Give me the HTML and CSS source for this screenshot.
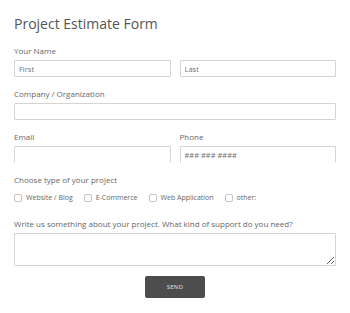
FILE: index.html
```html
<!DOCTYPE html>
<html>
<head>
<meta charset="utf-8">
<link rel="stylesheet" href="styles.css">
</head>
<body>
<form class="form">
  <h1 class="title">Project Estimate Form</h1>
  <div class="field">
    <label class="label">Your Name</label>
    <div class="row">
      <input class="input" type="text" placeholder="First">
      <input class="input" type="text" placeholder="Last">
    </div>
  </div>
  <div class="field">
    <label class="label">Company / Organization</label>
    <input class="input" type="text">
  </div>
  <div class="row">
    <div class="field">
      <label class="label">Email</label>
      <input class="input input-open" type="text">
    </div>
    <div class="field">
      <label class="label">Phone</label>
      <input class="input input-open" type="text" placeholder="### ### ####">
    </div>
  </div>
  <div class="field">
    <label class="label">Choose type of your project</label>
    <div class="checks">
      <label class="check"><span class="box"></span>Website / Blog</label>
      <label class="check"><span class="box"></span>E-Commerce</label>
      <label class="check"><span class="box"></span>Web Application</label>
      <label class="check"><span class="box"></span>other:</label>
    </div>
  </div>
  <div class="field">
    <label class="label">Write us something about your project. What kind of support do you need?</label>
    <textarea class="textarea"></textarea>
  </div>
  <div class="actions">
    <button class="send" type="button">SEND</button>
  </div>
</form>
</body>
</html>
```
FILE: styles.css
```css
* { box-sizing: border-box; }
html, body { margin: 0; padding: 0; background: #fff; }
body {
  font-family: "Open Sans", "Noto Sans", sans-serif;
  color: #555;
}
.form {
  padding: 0 14px;
  display: flex;
  flex-direction: column;
  gap: 12px;
}
.title {
  margin: 15px 0 1px;
  font-size: 14px;
  line-height: 18px;
  font-weight: 400;
  color: #555;
}
.field {
  display: flex;
  flex-direction: column;
  gap: 4px;
  min-width: 0;
}
.label {
  font-size: 8px;
  line-height: 10px;
  color: #666;
}
.row {
  display: grid;
  grid-template-columns: 1fr 1fr;
  column-gap: 9px;
}
.input {
  display: block;
  width: 100%;
  height: 17px;
  border: 1px solid #d4d4d4;
  border-radius: 1px;
  padding: 0 4px;
  font-family: inherit;
  font-size: 7.5px;
  color: #555;
  background: #fff;
  outline: none;
}
.input::placeholder { color: #707070; }
.input-open { border-bottom-color: transparent; }
.checks {
  display: flex;
  align-items: center;
  height: 18px;
  gap: 11px;
}
.check {
  display: flex;
  align-items: center;
  gap: 4px;
  font-size: 7px;
  line-height: 10px;
  color: #666;
}
.box {
  width: 8px;
  height: 8px;
  border: 1px solid #c4c4c4;
  border-radius: 2px;
  background: #fff;
}
.textarea {
  display: block;
  width: 100%;
  height: 33px;
  border: 1px solid #d4d4d4;
  border-radius: 1px;
  resize: vertical;
  font-family: inherit;
  font-size: 7px;
  outline: none;
}
.actions {
  display: flex;
  justify-content: center;
  margin-top: -2px;
}
.send {
  width: 60px;
  height: 22px;
  border: none;
  border-radius: 2px;
  background: #4d4d4d;
  color: #e6e6e6;
  font-family: inherit;
  font-size: 6px;
  letter-spacing: 0.3px;
  padding: 0;
}
```
